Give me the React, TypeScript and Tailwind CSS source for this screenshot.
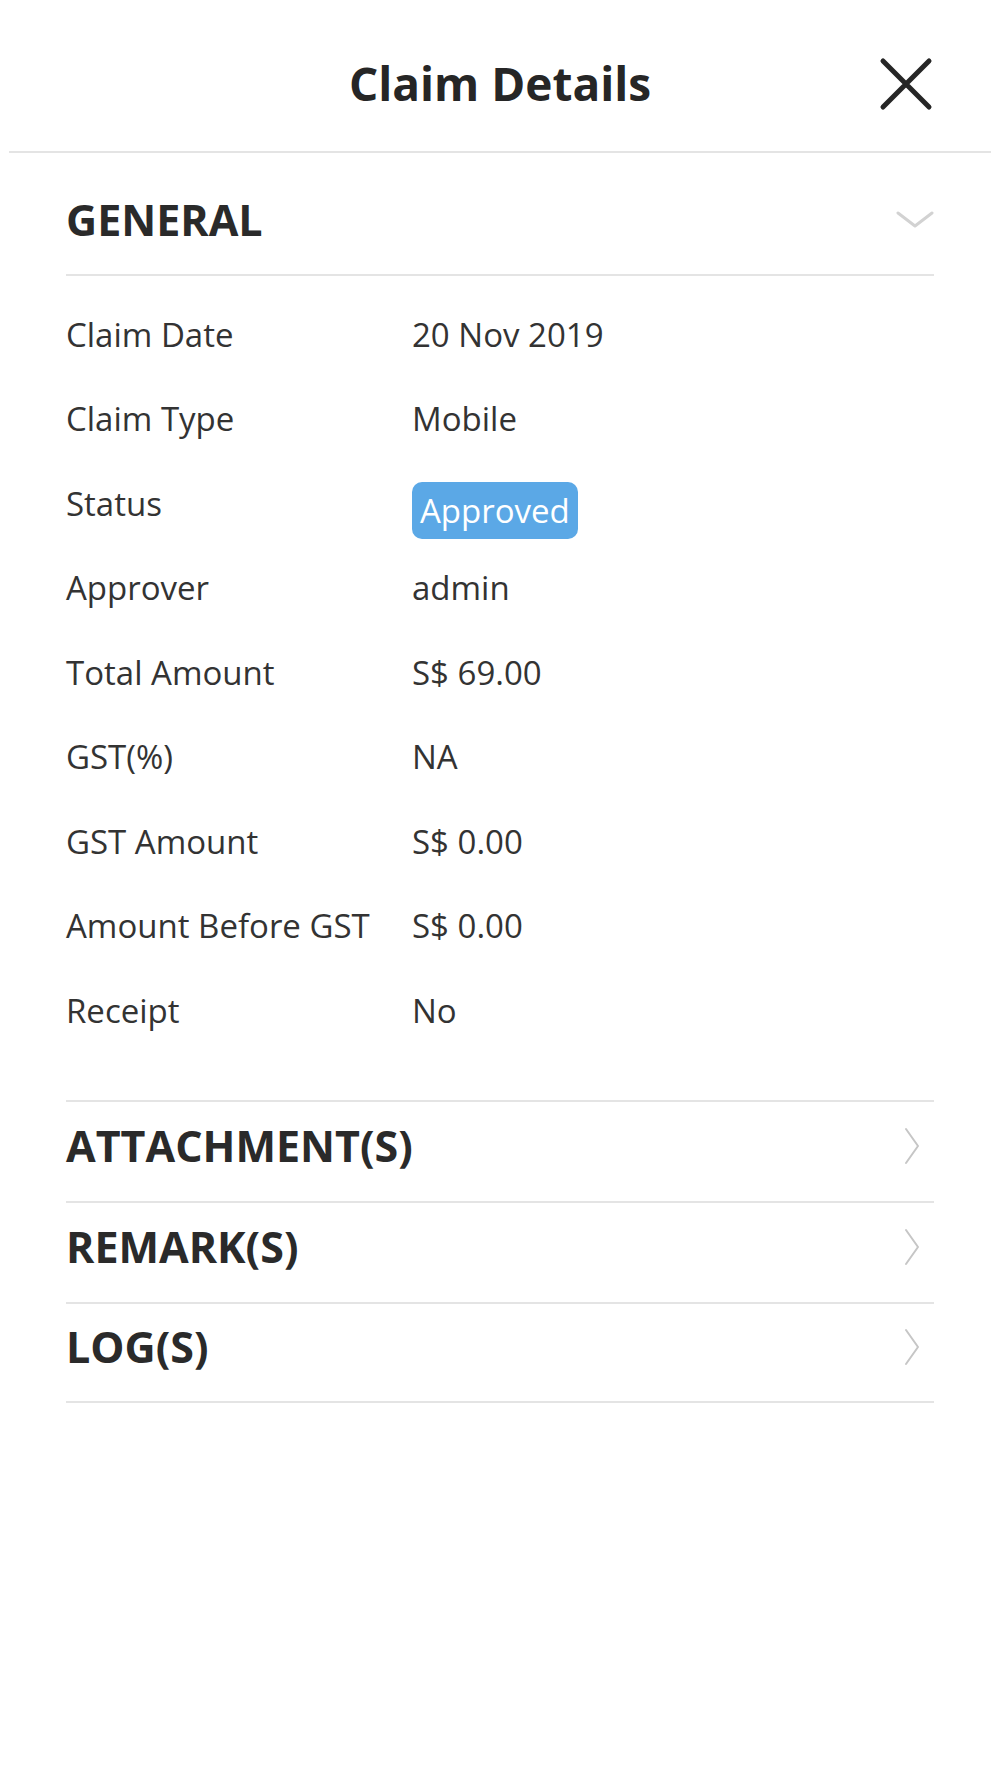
const rows = [
  { label: "Claim Date", value: "20 Nov 2019" },
  { label: "Claim Type", value: "Mobile" },
  { label: "Status", value: "Approved", badge: true },
  { label: "Approver", value: "admin" },
  { label: "Total Amount", value: "S$ 69.00" },
  { label: "GST(%)", value: "NA" },
  { label: "GST Amount", value: "S$ 0.00" },
  { label: "Amount Before GST", value: "S$ 0.00" },
  { label: "Receipt", value: "No" },
];

const sections = ["ATTACHMENT(S)", "REMARK(S)", "LOG(S)"];

const CloseIcon = () => (
  <svg width="54" height="54" viewBox="0 0 54 54" fill="none">
    <path
      d="M4 4 L50 50 M50 4 L4 50"
      stroke="#262626"
      strokeWidth="5"
      strokeLinecap="round"
    />
  </svg>
);

const ChevronDown = () => (
  <svg width="38" height="17" viewBox="0 0 38 17" fill="none">
    <path
      d="M2 2 L19 15 L36 2"
      stroke="#d2d2d2"
      strokeWidth="3"
      strokeLinecap="round"
      strokeLinejoin="round"
    />
  </svg>
);

const ChevronRight = () => (
  <svg width="16" height="38" viewBox="0 0 16 38" fill="none">
    <path
      d="M2 2 L14 19 L2 36"
      stroke="#c6c6c6"
      strokeWidth="2"
      strokeLinecap="round"
      strokeLinejoin="round"
    />
  </svg>
);

const App = () => {
  return (
    <div className="w-[1000px] min-h-[1778px] bg-white font-['Open_Sans',sans-serif] text-[#2a2a2a]">
      <header className="mx-[9px] h-[153px] pt-[14px] grid grid-cols-[1fr_auto_1fr] items-center border-b-2 border-[#e4e4e4]">
        <div />
        <h1 className="text-[46px] font-bold text-[#262626] leading-none">
          Claim Details
        </h1>
        <div className="flex justify-end pr-[58px] pt-[2px]">
          <CloseIcon />
        </div>
      </header>

      <div className="mx-[66px]">
        <div className="h-[123px] pt-[11px] flex items-center justify-between border-b-2 border-[#e4e4e4]">
          <h2 className="text-[43px] font-bold leading-none">GENERAL</h2>
          <ChevronDown />
        </div>

        <div className="pt-[16px] pb-[47px]">
          {rows.map((r) => (
            <div key={r.label} className="h-[84.5px] flex items-center">
              <div className="w-[346px] text-[33px] font-medium leading-none text-[#333]">
                {r.label}
              </div>
              {r.badge ? (
                <span className="translate-y-[7px] h-[57px] px-[8px] rounded-[10px] bg-[#5ba8e6] text-white text-[33px] leading-none flex items-center">
                  {r.value}
                </span>
              ) : (
                <div className="text-[33px] leading-none text-[#333]">
                  {r.value}
                </div>
              )}
            </div>
          ))}
        </div>

        {sections.map((s) => (
          <div
            key={s}
            className="h-[101px] pb-[11px] flex items-center justify-between border-t-2 border-[#e4e4e4] last:border-b-2"
          >
            <h2 className="text-[43px] font-bold leading-none">{s}</h2>
            <div className="mr-[14px]">
              <ChevronRight />
            </div>
          </div>
        ))}
      </div>
    </div>
  );
};

export default App;
